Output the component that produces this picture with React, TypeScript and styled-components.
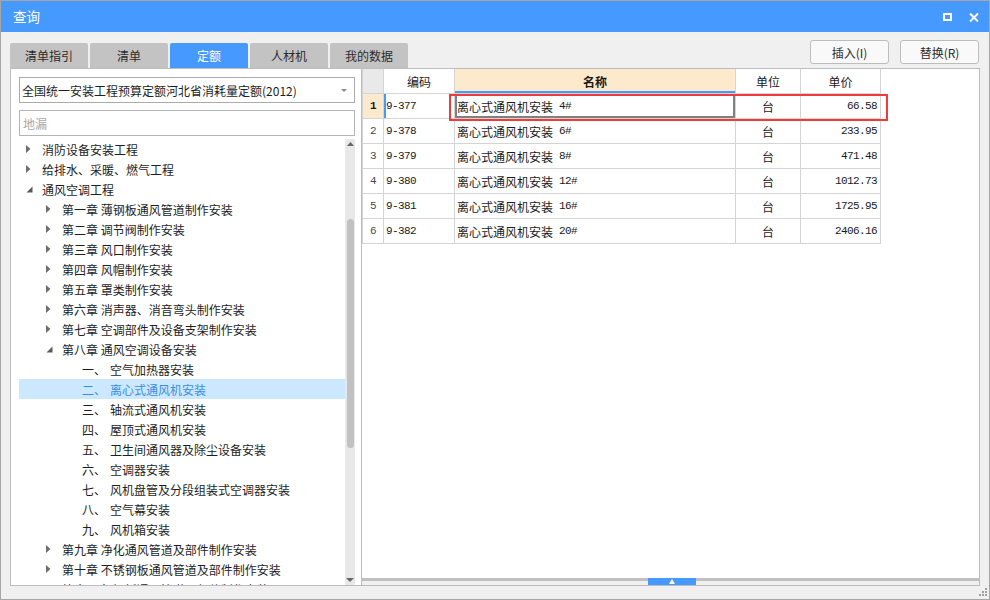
import React from "react";
import styled, { createGlobalStyle } from "styled-components";

const GlobalStyle = createGlobalStyle`
  html, body { margin: 0; padding: 0; background: #f0f0f0; }
  body {
    font-family: "Noto Sans CJK SC", "Microsoft YaHei", sans-serif;
    font-size: 12px;
    color: #1e1e1e;
  }
  * { box-sizing: border-box; }
`;

const BLUE = "#4599ff";

const Window = styled.div`
  position: relative;
  width: 990px;
  height: 600px;
  border: 1px solid #a6a6a6;
  background: #f0f0f0;
  display: flex;
  flex-direction: column;
  overflow: hidden;
`;

const TitleBar = styled.div`
  flex: none;
  height: 31px;
  background: ${BLUE};
  display: flex;
  align-items: center;
  justify-content: space-between;
  padding: 0 10px 0 12px;
`;

const Title = styled.div`
  color: #fff;
  font-size: 13.5px;
  line-height: 31px;
`;

const Controls = styled.div`
  display: flex;
  align-items: center;
  gap: 17px;
  padding-top: 1px;
`;

const Body = styled.div`
  flex: 1;
  display: flex;
  flex-direction: column;
  padding: 8px 9px 0 9px;
`;

const TopRow = styled.div`
  height: 28px;
  display: flex;
  justify-content: space-between;
`;

const Tabs = styled.div`
  align-self: flex-end;
  display: flex;
  gap: 2px;
`;

const Tab = styled.div<{ $active?: boolean }>`
  width: 78px;
  height: 25px;
  border-radius: 2px 2px 0 0;
  background: ${(p) => (p.$active ? BLUE : "#c3c3c3")};
  color: ${(p) => (p.$active ? "#fff" : "#2b2b2b")};
  font-size: 12px;
  display: flex;
  align-items: center;
  justify-content: center;
`;

const Buttons = styled.div`
  display: flex;
  gap: 11px;
  margin-right: 1px;
`;

const Button = styled.div`
  width: 79px;
  height: 24px;
  border: 1px solid #bdbdbd;
  border-radius: 3px;
  background: #f9f9f9;
  color: #2b2b2b;
  font-size: 12px;
  display: flex;
  align-items: center;
  justify-content: center;
`;

const Main = styled.div`
  height: 518px;
  display: flex;
`;

const LeftPanel = styled.div`
  width: 351px;
  flex: none;
  border: 1px solid #bcbcbc;
  border-right: none;
  background: #fff;
  padding: 8px 6px 0 8px;
  display: flex;
  flex-direction: column;
`;

const Select = styled.div`
  height: 26px;
  border: 1px solid #ababab;
  padding: 0 7px 0 2px;
  display: flex;
  align-items: center;
  justify-content: space-between;
  font-size: 12px;
  color: #1e1e1e;
`;

const Search = styled.div`
  margin-top: 7px;
  height: 26px;
  border: 1px solid #b4b4b4;
  padding: 0 3px;
  display: flex;
  align-items: center;
  font-size: 12px;
  color: #a8a8a8;
`;

const TreeArea = styled.div`
  margin-top: 3px;
  flex: 1;
  min-height: 0;
  display: flex;
`;

const TreeList = styled.div`
  flex: 1;
  overflow: hidden;
`;

const TreeRow = styled.div<{ $level: number; $selected?: boolean }>`
  height: 20px;
  display: flex;
  align-items: center;
  padding-left: ${(p) => p.$level * 20}px;
  background: ${(p) => (p.$selected ? "#cce8ff" : "transparent")};
  color: ${(p) => (p.$selected ? "#3a8de4" : "#1e1e1e")};
  font-size: 12px;
  white-space: nowrap;
`;

const ArrowCell = styled.div`
  width: 23px;
  flex: none;
  display: flex;
  align-items: center;
  padding-left: 7px;
`;

const ItemNum = styled.span`
  width: 28px;
  flex: none;
`;

const Scrollbar = styled.div`
  width: 10px;
  flex: none;
  background: #e8e8e8;
  display: flex;
  flex-direction: column;
  align-items: center;
`;

const ScrollArrow = styled.svg<{ $top?: boolean }>`
  flex: none;
  margin-top: ${(p) => (p.$top ? "3px" : "auto")};
  margin-bottom: ${(p) => (p.$top ? "0" : "3px")};
`;

const Thumb = styled.div`
  margin-top: 73px;
  width: 7px;
  height: 229px;
  border-radius: 4px;
  background: #c1c1c1;
`;

const RightPanel = styled.div`
  flex: 1;
  border: 1px solid #bcbcbc;
  background: #fff;
  display: flex;
  flex-direction: column;
`;

const TableWrap = styled.div`
  position: relative;
  align-self: flex-start;
`;

const Grid = styled.div`
  display: grid;
  grid-template-columns: 21px 71px 281px 65px 80px;
  border-left: 1px solid #d4d4d4;
`;

type Align = "left" | "center" | "right";

const Cell = styled.div<{
  $align?: Align;
  $bg?: string;
  $bold?: boolean;
  $mono?: boolean;
  $blueBottom?: boolean;
  $current?: boolean;
  $blueLeft?: boolean;
  $muted?: boolean;
}>`
  height: 25px;
  border-right: 1px solid #d4d4d4;
  border-bottom: 1px solid #d4d4d4;
  background: ${(p) => p.$bg || "#fff"};
  display: flex;
  align-items: center;
  justify-content: ${(p) =>
    p.$align === "right" ? "flex-end" : p.$align === "center" ? "center" : "flex-start"};
  padding: ${(p) => (p.$align === "right" ? "0 3px 0 0" : p.$align === "center" ? "0" : "0 0 0 2px")};
  font-size: ${(p) => (p.$mono ? "11px" : "12px")};
  font-family: ${(p) =>
    p.$mono ? `"Liberation Mono", "Noto Sans CJK SC", monospace` : `"Noto Sans CJK SC", sans-serif`};
  letter-spacing: ${(p) => (p.$mono ? "-0.6px" : "0")};
  font-weight: ${(p) => (p.$bold ? 700 : 400)};
  color: ${(p) => (p.$muted ? "#4a4a4a" : "#1a1a1a")};
  white-space: nowrap;
  box-shadow: ${(p) =>
    p.$blueBottom
      ? `inset 0 -2px 0 ${BLUE}`
      : p.$current
      ? "inset 0 0 0 2px #808080"
      : p.$blueLeft
      ? `inset 2px 0 0 ${BLUE}`
      : "none"};
`;

const Mono = styled.span`
  font-family: "Liberation Mono", monospace;
  font-size: 11px;
  letter-spacing: -0.6px;
  white-space: pre;
`;

const RedFrame = styled.div`
  position: absolute;
  left: 87px;
  top: 25px;
  width: 439px;
  height: 27px;
  border: 2px solid #f03b3b;
  pointer-events: none;
`;

const Splitter = styled.div`
  margin-top: auto;
  height: 7px;
  background: linear-gradient(#c0c0c0 0 3px, #f0f0f0 3px 100%);
  display: flex;
  justify-content: center;
  padding-left: 2px;
`;

const Handle = styled.div`
  width: 48px;
  height: 7px;
  background: ${BLUE};
  display: flex;
  align-items: center;
  justify-content: center;
`;

const Grip = styled.svg`
  position: absolute;
  right: 2px;
  bottom: 3px;
`;

const Collapsed = () => (
  <svg width="5" height="8" viewBox="0 0 5 8">
    <polygon points="0,0 4.5,4 0,8" fill="#6e6e6e" />
  </svg>
);

const Expanded = () => (
  <svg width="7" height="7" viewBox="0 0 7 7">
    <polygon points="6.5,0.5 6.5,6.5 0.5,6.5" fill="#5a5a5a" />
  </svg>
);

type Node = { level: number; text: string; num?: string; state?: "c" | "e"; selected?: boolean };

const tree: Node[] = [
  { level: 0, text: "消防设备安装工程", state: "c" },
  { level: 0, text: "给排水、采暖、燃气工程", state: "c" },
  { level: 0, text: "通风空调工程", state: "e" },
  { level: 1, text: "第一章 薄钢板通风管道制作安装", state: "c" },
  { level: 1, text: "第二章 调节阀制作安装", state: "c" },
  { level: 1, text: "第三章 风口制作安装", state: "c" },
  { level: 1, text: "第四章 风帽制作安装", state: "c" },
  { level: 1, text: "第五章 罩类制作安装", state: "c" },
  { level: 1, text: "第六章 消声器、消音弯头制作安装", state: "c" },
  { level: 1, text: "第七章 空调部件及设备支架制作安装", state: "c" },
  { level: 1, text: "第八章 通风空调设备安装", state: "e" },
  { level: 2, num: "一、", text: "空气加热器安装" },
  { level: 2, num: "二、", text: "离心式通风机安装", selected: true },
  { level: 2, num: "三、", text: "轴流式通风机安装" },
  { level: 2, num: "四、", text: "屋顶式通风机安装" },
  { level: 2, num: "五、", text: "卫生间通风器及除尘设备安装" },
  { level: 2, num: "六、", text: "空调器安装" },
  { level: 2, num: "七、", text: "风机盘管及分段组装式空调器安装" },
  { level: 2, num: "八、", text: "空气幕安装" },
  { level: 2, num: "九、", text: "风机箱安装" },
  { level: 1, text: "第九章 净化通风管道及部件制作安装", state: "c" },
  { level: 1, text: "第十章 不锈钢板通风管道及部件制作安装", state: "c" },
  { level: 1, text: "第十一章 铝板通风管道及部件制作安装", state: "c" },
];

const rows = [
  { code: "9-377", size: "4#", price: "66.58" },
  { code: "9-378", size: "6#", price: "233.95" },
  { code: "9-379", size: "8#", price: "471.48" },
  { code: "9-380", size: "12#", price: "1012.73" },
  { code: "9-381", size: "16#", price: "1725.95" },
  { code: "9-382", size: "20#", price: "2406.16" },
];

export default function App() {
  return (
    <>
      <GlobalStyle />
      <Window>
        <TitleBar>
          <Title>查询</Title>
          <Controls>
            <svg width="9" height="8" viewBox="0 0 9 8">
              <rect x="1" y="1" width="7" height="6" fill="none" stroke="#fff" strokeWidth="2" />
            </svg>
            <svg width="10" height="9" viewBox="0 0 10 9">
              <path d="M1 0.5 L9 8.5 M9 0.5 L1 8.5" stroke="#fff" strokeWidth="2" />
            </svg>
          </Controls>
        </TitleBar>
        <Body>
          <TopRow>
            <Tabs>
              <Tab>清单指引</Tab>
              <Tab>清单</Tab>
              <Tab $active>定额</Tab>
              <Tab>人材机</Tab>
              <Tab>我的数据</Tab>
            </Tabs>
            <Buttons>
              <Button>插入(I)</Button>
              <Button>替换(R)</Button>
            </Buttons>
          </TopRow>
          <Main>
            <LeftPanel>
              <Select>
                <span>全国统一安装工程预算定额河北省消耗量定额(2012)</span>
                <svg width="6" height="3" viewBox="0 0 6 3">
                  <polygon points="0,0 6,0 3,3" fill="#8a8a8a" />
                </svg>
              </Select>
              <Search>地漏</Search>
              <TreeArea>
                <TreeList>
                  {tree.map((n, i) => (
                    <TreeRow key={i} $level={n.level} $selected={n.selected}>
                      <ArrowCell>
                        {n.state === "c" && <Collapsed />}
                        {n.state === "e" && <Expanded />}
                      </ArrowCell>
                      {n.num && <ItemNum>{n.num}</ItemNum>}
                      <span>{n.text}</span>
                    </TreeRow>
                  ))}
                </TreeList>
                <Scrollbar>
                  <ScrollArrow $top width="7" height="4" viewBox="0 0 7 4">
                    <polygon points="3.5,0 7,4 0,4" fill="#666" />
                  </ScrollArrow>
                  <Thumb />
                  <ScrollArrow width="8" height="4" viewBox="0 0 8 4">
                    <polygon points="0,0 8,0 4,4" fill="#666" />
                  </ScrollArrow>
                </Scrollbar>
              </TreeArea>
            </LeftPanel>
            <RightPanel>
              <TableWrap>
                <Grid>
                  <Cell $bg="#e9e9e9" />
                  <Cell $align="center">编码</Cell>
                  <Cell $align="center" $bg="#fde9cc" $bold $blueBottom>
                    名称
                  </Cell>
                  <Cell $align="center">单位</Cell>
                  <Cell $align="center">单价</Cell>
                  {rows.map((r, i) => {
                    const sel = i === 0;
                    return (
                      <React.Fragment key={r.code}>
                        <Cell $align="center" $mono $bg={sel ? "#fde9cc" : "#fff"} $bold={sel} $muted={!sel}>
                          {i + 1}
                        </Cell>
                        <Cell $mono $blueLeft={sel}>
                          {r.code}
                        </Cell>
                        <Cell $current={sel}>
                          离心式通风机安装<Mono> {r.size}</Mono>
                        </Cell>
                        <Cell $align="center">台</Cell>
                        <Cell $align="right" $mono>
                          {r.price}
                        </Cell>
                      </React.Fragment>
                    );
                  })}
                </Grid>
                <RedFrame />
              </TableWrap>
              <Splitter>
                <Handle>
                  <svg width="6" height="5" viewBox="0 0 6 5">
                    <polygon points="3,0 6,5 0,5" fill="#fff" />
                  </svg>
                </Handle>
              </Splitter>
            </RightPanel>
          </Main>
        </Body>
        <Grip width="8" height="8" viewBox="0 0 8 8">
          <rect x="6" y="0" width="2" height="2" fill="#a0a0a0" />
          <rect x="3" y="3" width="2" height="2" fill="#a0a0a0" />
          <rect x="6" y="3" width="2" height="2" fill="#a0a0a0" />
          <rect x="0" y="6" width="2" height="2" fill="#a0a0a0" />
          <rect x="3" y="6" width="2" height="2" fill="#a0a0a0" />
          <rect x="6" y="6" width="2" height="2" fill="#a0a0a0" />
        </Grip>
      </Window>
    </>
  );
}
